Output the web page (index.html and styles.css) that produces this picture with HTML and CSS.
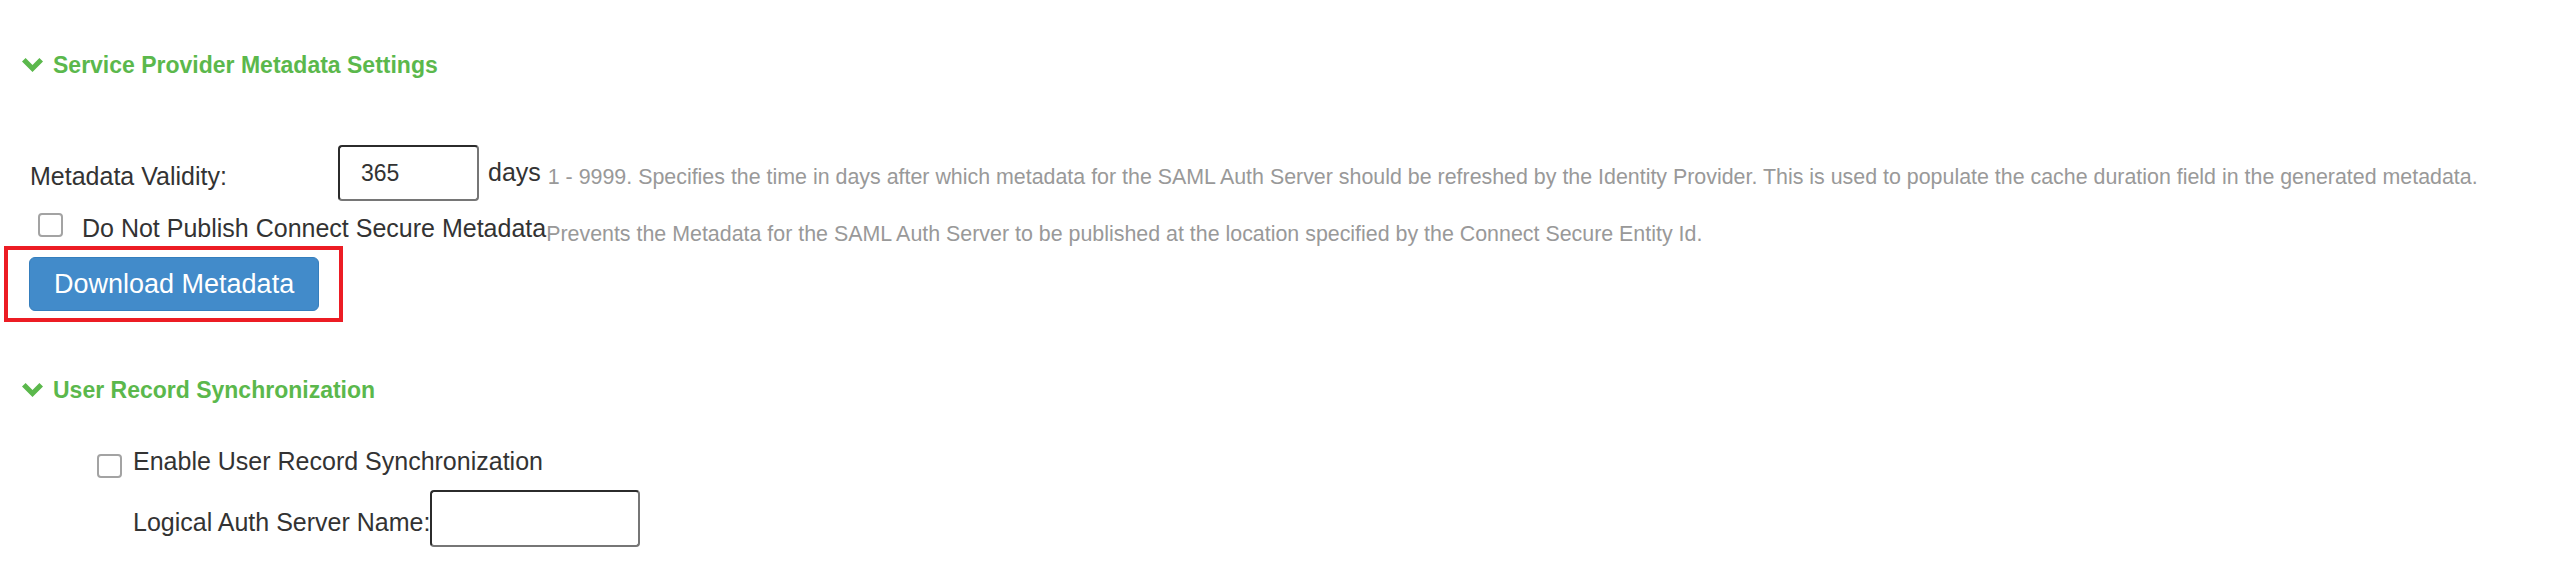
FILE: index.html
```html
<!DOCTYPE html>
<html lang="en">
<head>
    <meta charset="UTF-8">
    <meta name="viewport" content="width=device-width, initial-scale=1.0">
    <title>SAML Auth Server</title>
    <link rel="stylesheet" href="styles.css">
</head>
<body>

    <!-- Service provider metadata -->
    <section class="panel">
        <h3 class="panel-title">
            <svg class="chevron" viewBox="0 0 21 14" width="21" height="14"><polygon points="0,3.6 3.6,0 10.5,6.9 17.4,0 21,3.6 10.5,14"/></svg>
            Service Provider Metadata Settings
        </h3>

        <div class="field-row validity-row">
            <label class="field-label" for="validity">Metadata Validity:</label>
            <input class="text-input validity-input" id="validity" type="text" value="365">
            <span class="unit">days <span class="hint">1 - 9999. Specifies the time in days after which metadata for the SAML Auth Server should be refreshed by the Identity Provider. This is used to populate the cache duration field in the generated metadata.</span></span>
        </div>

        <div class="check-row publish-row">
            <input class="checkbox" type="checkbox" id="noPublish">
            <label class="check-label" for="noPublish">Do Not Publish Connect Secure Metadata<span class="hint">Prevents the Metadata for the SAML Auth Server to be published at the location specified by the Connect Secure Entity Id.</span></label>
        </div>

        <div class="highlight">
            <button class="btn btn-primary">Download Metadata</button>
        </div>
    </section>

    <!-- User record synchronization -->
    <section class="panel">
        <h3 class="panel-title sync-title">
            <svg class="chevron" viewBox="0 0 21 14" width="21" height="14"><polygon points="0,3.6 3.6,0 10.5,6.9 17.4,0 21,3.6 10.5,14"/></svg>
            User Record Synchronization
        </h3>

        <div class="check-row sync-row">
            <input class="checkbox" type="checkbox" id="enableSync">
            <label class="check-label" for="enableSync">Enable User Record Synchronization</label>
        </div>

        <div class="field-row name-row">
            <label class="field-label" for="authName">Logical Auth Server Name:</label>
            <input class="text-input name-input" id="authName" type="text">
        </div>
    </section>

</body>
</html>
```

FILE: styles.css
```css
* {
    box-sizing: border-box;
}

body {
    margin: 0;
    font-family: "Liberation Sans", Arial, sans-serif;
    font-size: 25px;
    line-height: 29px;
    color: #333;
    background: #fff;
}

/* Collapsible section headers */
.panel-title {
    display: flex;
    align-items: center;
    gap: 10px;
    margin: 52px 0 0;
    padding-left: 22px;
    font-size: 23px;
    line-height: 26px;
    font-weight: bold;
    color: #5bb84c;
}

.chevron {
    fill: #5bb84c;
    flex-shrink: 0;
}

.sync-title {
    margin-top: 55px;
}

/* Label + input rows */
.field-row {
    display: flex;
    align-items: flex-start;
}

.field-label {
    padding-top: 17px;
    white-space: nowrap;
}

.validity-row {
    margin-top: 67px;
    padding-left: 30px;
}

.validity-row .field-label {
    width: 308px;
}

.text-input {
    font-family: "Liberation Sans", Arial, sans-serif;
    font-size: 23px;
    color: #333;
    background: #fff;
    border: 2px solid;
    border-color: #2b2b2b #767676 #767676 #2b2b2b;
    border-radius: 4px;
    outline: none;
}

.validity-input {
    width: 141px;
    height: 56px;
    padding: 0 0 0 21px;
}

.unit {
    margin: 13px 0 0 9px;
    white-space: nowrap;
}

/* Grey help text next to a field */
.hint {
    font-size: 21.4px;
    line-height: 0;
    color: #999;
    vertical-align: -3px;
}

/* Checkbox rows */
.check-row {
    display: flex;
    align-items: flex-start;
}

.checkbox {
    appearance: none;
    -webkit-appearance: none;
    width: 25px;
    height: 24px;
    margin: 0;
    border: 2px solid #a3a3a3;
    border-radius: 4px;
    background: #fff;
    flex-shrink: 0;
}

.publish-row {
    margin-top: 12px;
    padding-left: 38px;
}

.publish-row .check-label {
    margin: 1px 0 0 19px;
    white-space: nowrap;
}

.publish-row .hint {
    vertical-align: -4px;
}

.sync-row {
    margin-top: 44px;
    padding-left: 97px;
}

.sync-row .checkbox {
    margin-top: 7px;
}

.sync-row .check-label {
    margin-left: 11px;
}

.name-row {
    margin-top: 12px;
    padding-left: 133px;
}

.name-row .field-label {
    padding-top: 18px;
}

.name-input {
    width: 210px;
    height: 57px;
    padding: 0 10px;
}

/* Red annotation box round the button */
.highlight {
    width: fit-content;
    margin: 3px 0 0 4px;
    padding: 7px 20px 7px 21px;
    border: 4px solid #ec1c24;
}

.btn {
    display: block;
    height: 54px;
    padding: 0 24px;
    font-family: "Liberation Sans", Arial, sans-serif;
    font-size: 27px;
    line-height: 52px;
    border-radius: 6px;
    cursor: pointer;
}

.btn-primary {
    color: #fff;
    background: #428bca;
    border: 1px solid #357ebd;
}
```
